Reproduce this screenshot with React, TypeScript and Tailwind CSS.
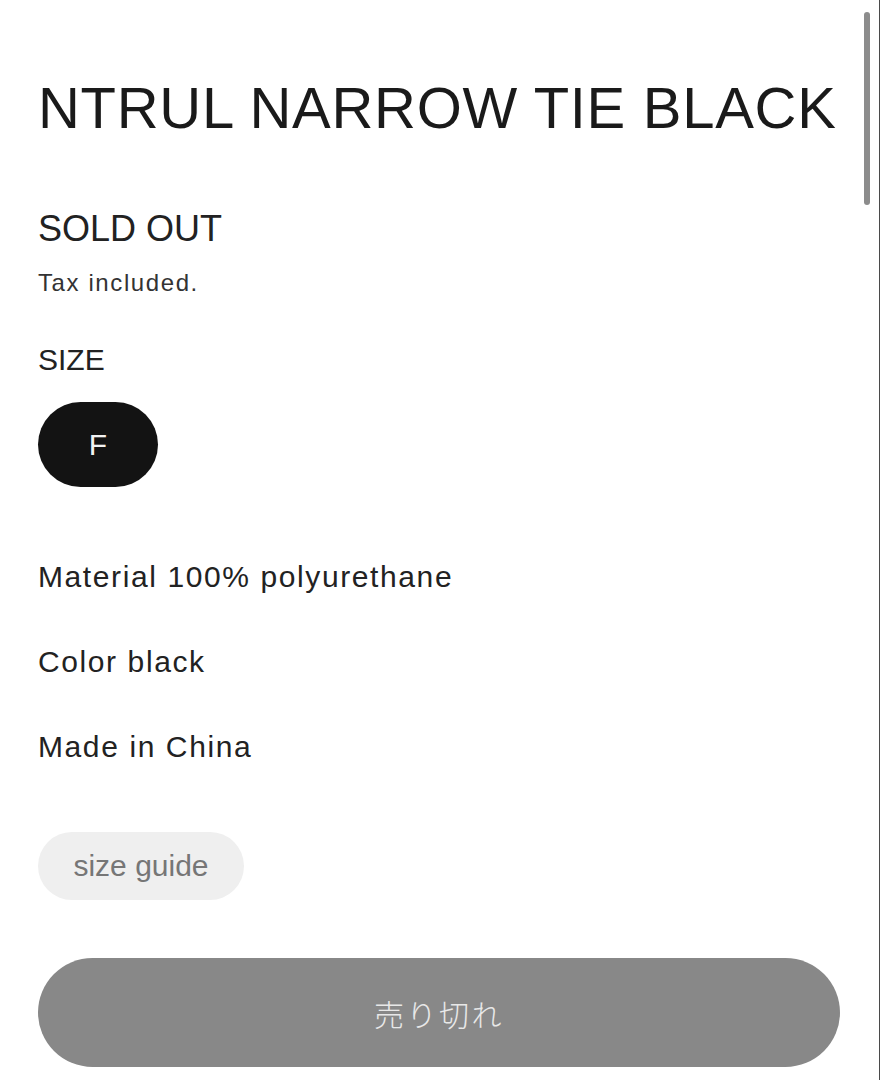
const sans = "font-['Liberation_Sans',Arial,sans-serif]";

const details = ["Material 100% polyurethane", "Color black", "Made in China"];

const App = () => {
  return (
    <div className={`relative h-[1080px] w-[880px] overflow-hidden bg-white ${sans}`}>
      <div className="flex flex-col items-start pl-[38px] pr-[40px] pt-[79px]">
        <h1 className="whitespace-nowrap text-[58px] font-normal leading-none tracking-[0.7px] text-[#1a1a1a]">
          NTRUL NARROW TIE BLACK
        </h1>

        <p className="mt-[74px] text-[36px] leading-none text-[#222]">SOLD OUT</p>
        <p className="mt-[24px] text-[24px] leading-none tracking-[1.6px] text-[#333]">
          Tax included.
        </p>

        <p className="mt-[50px] text-[30px] leading-none text-[#222]">SIZE</p>
        <button
          type="button"
          className="mt-[27px] flex h-[85px] w-[120px] items-center justify-center rounded-full bg-[#131313] text-[30px] leading-none text-[#f2f2f2]"
        >
          F
        </button>

        <div className="mt-[75px] flex flex-col gap-[55px]">
          {details.map((line) => (
            <p
              key={line}
              className="text-[30px] leading-none tracking-[1.6px] text-[#222]"
            >
              {line}
            </p>
          ))}
        </div>

        <button
          type="button"
          className="mt-[70px] flex h-[68px] w-[206px] items-center justify-center rounded-full bg-[#efefef] text-[30px] leading-none text-[#767676]"
        >
          size guide
        </button>

        <button
          type="button"
          disabled
          className="mt-[58px] flex h-[109px] w-[802px] items-center justify-center rounded-full bg-[#888888] font-['Noto_Sans_CJK_JP',sans-serif] text-[30px] font-light leading-none tracking-[2.5px] text-[#e8e8e8]"
        >
          売り切れ
        </button>
      </div>

      {/* scrollbar + frame edge */}
      <div className="absolute left-[864px] top-[12px] h-[193px] w-[6px] rounded-full bg-[#8c8c8c]" />
      <div className="absolute right-0 top-0 h-full w-px bg-[#4a4a4a]" />
    </div>
  );
};

export default App;
